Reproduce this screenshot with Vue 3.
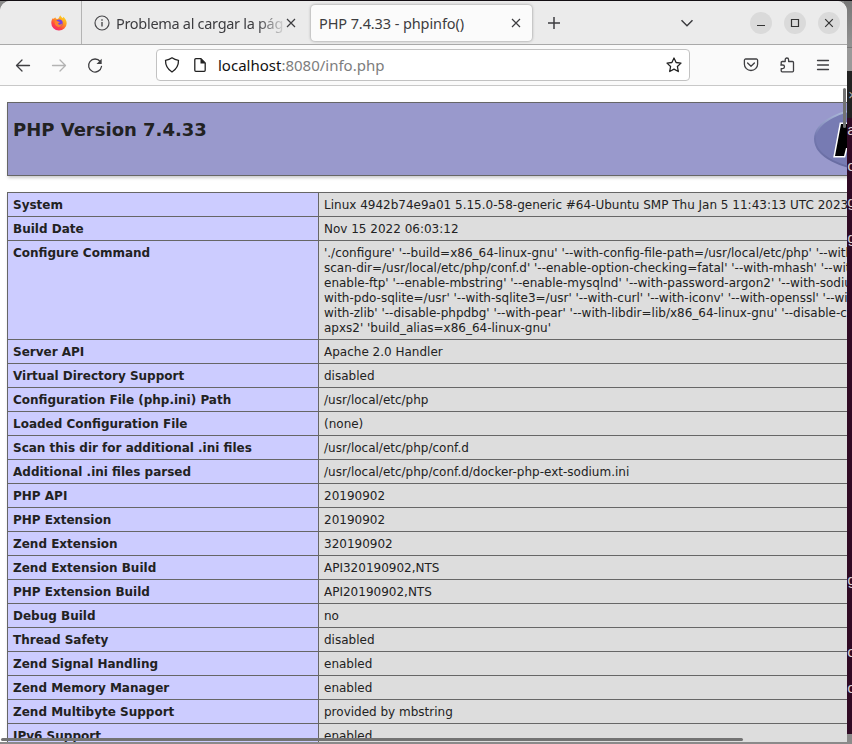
<script setup>
const rows = [
  ['System', 'Linux 4942b74e9a01 5.15.0-58-generic #64-Ubuntu SMP Thu Jan 5 11:43:13 UTC 2023'],
  ['Build Date', 'Nov 15 2022 06:03:12'],
  ['Configure Command', [
    "'./configure' '--build=x86_64-linux-gnu' '--with-config-file-path=/usr/local/etc/php' '--with-config-file-",
    "scan-dir=/usr/local/etc/php/conf.d' '--enable-option-checking=fatal' '--with-mhash' '--with-pic' '--",
    "enable-ftp' '--enable-mbstring' '--enable-mysqlnd' '--with-password-argon2' '--with-sodium=shared' '--",
    "with-pdo-sqlite=/usr' '--with-sqlite3=/usr' '--with-curl' '--with-iconv' '--with-openssl' '--with-readline' '--",
    "with-zlib' '--disable-phpdbg' '--with-pear' '--with-libdir=lib/x86_64-linux-gnu' '--disable-cgi' '--with-",
    "apxs2' 'build_alias=x86_64-linux-gnu'",
  ].join('\n')],
  ['Server API', 'Apache 2.0 Handler'],
  ['Virtual Directory Support', 'disabled'],
  ['Configuration File (php.ini) Path', '/usr/local/etc/php'],
  ['Loaded Configuration File', '(none)'],
  ['Scan this dir for additional .ini files', '/usr/local/etc/php/conf.d'],
  ['Additional .ini files parsed', '/usr/local/etc/php/conf.d/docker-php-ext-sodium.ini'],
  ['PHP API', '20190902'],
  ['PHP Extension', '20190902'],
  ['Zend Extension', '320190902'],
  ['Zend Extension Build', 'API320190902,NTS'],
  ['PHP Extension Build', 'API20190902,NTS'],
  ['Debug Build', 'no'],
  ['Thread Safety', 'disabled'],
  ['Zend Signal Handling', 'enabled'],
  ['Zend Memory Manager', 'enabled'],
  ['Zend Multibyte Support', 'provided by mbstring'],
  ['IPv6 Support', 'enabled'],
]
const terminalGlyphs = [
  { ch: 'a', y: 132 }, { ch: 'c', y: 168 }, { ch: 'g', y: 204 }, { ch: 'g', y: 240 },
  { ch: 'g', y: 582 }, { ch: 'c', y: 654 }, { ch: 'c', y: 690 },
]
</script>

<template>
  <div class="desktop">
    <div class="behind">
      <div class="behind-title"></div>
      <div class="behind-bar"></div>
      <div class="behind-menu"></div>
      <div class="behind-term"></div>
      <span v-for="g in terminalGlyphs" :key="g.y" class="glyph" :style="{ top: g.y - 10 + 'px' }">{{ g.ch }}</span>
      <span class="glyph menu-x">×</span>
    </div>

    <div class="window">
      <header class="tabs">
        <div class="pinned">
          <svg class="firefox" width="16" height="16" viewBox="0 0 16 16">
            <defs>
              <linearGradient id="flame" x1=".85" y1="0" x2=".2" y2="1">
                <stop offset="0" stop-color="#ffe226" />
                <stop offset=".4" stop-color="#ff9a1f" />
                <stop offset=".7" stop-color="#ff4a3d" />
                <stop offset="1" stop-color="#f0207c" />
              </linearGradient>
            </defs>
            <path d="M.3 8C.3 5.7 1 4.2 2 3c.2 0 .3.7.5 1C3.300 3.200 4 2.500 4.300 2.200c.2 1 .9 1.600 1.700 1.800C8 4 8 2 9.300.2c.3 1.200 1.300 2 2.500 3l.5-1.400C14 3.400 15.700 5.600 15.700 8.300A7.700 7.400 0 0 1 .3 8z" fill="url(#flame)" />
            <circle cx="8.200" cy="7.900" r="3.500" fill="#7542e5" />
            <path d="M3.600 6.300c1.400-.9 2.600-.7 3.500.1l1.900.5c-.3 1-1.900.8-2 1.900.8 1.600 3.600.8 4.300-.7.1 2.300-1.600 4-3.900 3.800-2.500-.2-4-2.500-3.800-5.600z" fill="#ff842e" />
          </svg>
        </div>
        <div class="tab idle">
          <svg width="16" height="16" viewBox="0 0 16 16" fill="none" stroke="#4a4a4d" stroke-width="1.2">
            <circle cx="8" cy="8" r="7" /><path d="M8 7v4.500M8 4.200v1.500" stroke-width="1.400" />
          </svg>
          <span class="tab-title fading">Problema al cargar la página</span>
          <svg class="close" width="10" height="10" viewBox="0 0 10 10"><path d="M1 1l8 8M9 1L1 9" /></svg>
        </div>
        <div class="tab active">
          <span class="tab-title">PHP 7.4.33 - phpinfo()</span>
          <svg class="close" width="10" height="10" viewBox="0 0 10 10"><path d="M1 1l8 8M9 1L1 9" /></svg>
        </div>
        <svg class="plus" width="14" height="14" viewBox="0 0 14 14"><path d="M7 1v12M1 7h12" /></svg>
        <svg class="chevron" width="14" height="8" viewBox="0 0 14 8"><path d="M1.500 1.200L7 6.700l5.500-5.500" /></svg>
        <div class="controls">
          <span class="control"><svg width="10" height="10" viewBox="0 0 10 10"><path d="M1 7.500h8" /></svg></span>
          <span class="control"><svg width="10" height="10" viewBox="0 0 10 10"><path d="M1.500 1.500h7v7h-7z" /></svg></span>
          <span class="control"><svg width="10" height="10" viewBox="0 0 10 10"><path d="M1.200 1.200l7.600 7.600M8.800 1.200L1.200 8.800" /></svg></span>
        </div>
      </header>

      <nav class="toolbar">
        <svg class="tool back" width="16" height="16" viewBox="0 0 16 16"><path d="M14.500 8.500H1.500M7 3L1.500 8.500 7 14" /></svg>
        <svg class="tool forward" width="16" height="16" viewBox="0 0 16 16"><path d="M1.500 8.500h13M9 3L14.500 8.500 9 14" /></svg>
        <svg class="tool reload" width="16" height="16" viewBox="0 0 16 16">
          <path d="M13.200 4.500A6.500 6.500 0 1 0 14.500 9.500" /><path d="M14.700 1.800v5.200H9.500z" fill="#3f3f42" stroke="none" />
        </svg>
        <div class="address">
          <svg class="tool" width="16" height="16" viewBox="0 0 16 16"><path d="M8 .8c2 1.500 4 2.200 6.500 2.500.1 5-2.500 9.200-6.500 11.700C4 12.500 1.400 8.300 1.500 3.300 4 3 6 2.300 8 .8z" /></svg>
          <svg class="tool page" width="14" height="16" viewBox="0 0 14 16"><path d="M2.800 1.700H8l4.200 4.200v7.400a1 1 0 0 1-1 1H2.800a1 1 0 0 1-1-1V2.700a1 1 0 0 1 1-1z" /><path d="M7.500 1.500v5h5z" fill="#222" stroke="none" /></svg>
          <span class="url"><b>localhost</b>:8080/info.php</span>
          <svg class="tool star" width="16" height="16" viewBox="0 0 16 16"><path d="M8 1l2.100 4.500 4.900.6-3.600 3.400.9 5L8 12.100l-4.300 2.400.9-5L1 6.100l4.900-.6z" /></svg>
        </div>
        <svg class="tool pocket" width="16" height="16" viewBox="0 0 16 16"><path d="M2.700 2h10.600a1.300 1.300 0 0 1 1.300 1.300v3.900a6.600 6.300 0 0 1-13.200 0V3.300A1.300 1.300 0 0 1 2.700 2zM4.600 6L8 9.300 11.400 6" /></svg>
        <svg class="tool puzzle" width="16" height="16" viewBox="0 0 16 16"><path d="M2.200 7V5.500a1 1 0 0 1 1-1h3V2.700a1.700 1.700 0 0 1 3.400 0v1.800h3.900a1 1 0 0 1 1 1v8.300a1 1 0 0 1-1 1H3.200a1 1 0 0 1-1-1v-2.200h1.500a1.800 1.800 0 0 0 0-3.600H1.800" /></svg>
        <svg class="tool menu" width="14" height="14" viewBox="0 0 14 14"><path d="M1.500 2.500h11M1.500 7h11M1.500 11.500h11" /></svg>
      </nav>

      <main class="page-view">
        <section class="banner">
          <h1>PHP Version 7.4.33</h1>
          <svg class="logo" width="122" height="64" viewBox="0 0 122 64">
            <defs><linearGradient id="rim" x1="0" y1="0" x2="0" y2="1"><stop offset="0" stop-color="#b4c3df" /><stop offset=".45" stop-color="#7378af" /><stop offset="1" stop-color="#666a9f" /></linearGradient></defs>
            <ellipse cx="61" cy="32" rx="60" ry="31" fill="#777bb3" stroke="url(#rim)" stroke-width="2" />
            <path d="M27 17h20c8 0 11 5 9 13-2 8-7 11-15 11h-9l-2 8h-9z" fill="#000" stroke="#fff" stroke-width="3" paint-order="stroke" />
          </svg>
        </section>
        <section class="info">
          <div v-for="r in rows" :key="r[0]" class="row">
            <div class="key">{{ r[0] }}</div>
            <div class="value">{{ r[1] }}</div>
          </div>
        </section>
        <div class="vbar"></div>
        <div class="hbar"></div>
      </main>
    </div>
  </div>
</template>

<style>
body { margin: 0; overflow: hidden; }
</style>

<style scoped>
* { box-sizing: border-box; }
.desktop { position: relative; width: 852px; height: 744px; overflow: hidden; background: #8a8a8a; border-top: 1px solid #120d12; }
svg { display: block; flex: none; fill: none; overflow: visible; }
.behind { position: absolute; top: -1px; right: 0; width: 8px; height: 744px; overflow: hidden; }
.behind-title { height: 47px; background: linear-gradient(#777, #929292); }
.behind-bar { height: 24px; background: #999; border-top: 1px solid #777; }
.behind-menu { height: 47px; background: #222; }
.behind-term { height: 616px; background: #300a24; }
.glyph { position: absolute; left: 3px; font: 15px/20px "Liberation Mono", monospace; color: #d8d0d6; }
.menu-x { top: 87px; left: 4px; color: #aaa; }
.window { position: relative; width: 847px; height: 741px; overflow: hidden; border-radius: 10px 10px 0 0; background: #fff; font-family: "Noto Sans", sans-serif; }
.tabs { display: flex; align-items: center; height: 44px; background: #ebebeb; border-bottom: 1px solid #a9a9a9; }
.pinned { display: flex; width: 82px; height: 43px; align-items: center; padding-left: 51px; border-right: 1px solid #b4b4b4; }
.tab { display: flex; align-items: center; flex: none; color: #3d3d40; font-size: 14.500px; }
.tab-title { flex: 1; overflow: hidden; white-space: nowrap; line-height: 24px; letter-spacing: -.1px; }
.idle { width: 228px; padding: 0 14px 0 12px; gap: 6px; }
.idle .close { margin-left: -4px; }
.idle .tab-title { letter-spacing: -.3px; }
.fading { -webkit-mask-image: linear-gradient(90deg, #000 84%, transparent 102%); mask-image: linear-gradient(90deg, #000 84%, transparent 102%); }
.active { width: 221px; height: 36px; margin: 0 1px; padding: 0 11px 0 8px; border-radius: 4px; background: #fbfbfb; box-shadow: 0 0 3px #888; }
.close, .plus, .chevron { stroke: #3d3d40; stroke-width: 1.200; }
.close { width: 10px; height: 10px; }
.plus { width: 14px; height: 14px; margin-left: 14px; stroke-width: 1.500; }
.chevron { margin-left: 119px; stroke-width: 1.500; }
.controls { display: flex; gap: 12px; margin-left: 56px; }
.control { display: grid; place-items: center; width: 22px; height: 22px; border-radius: 50%; background: #dadada; }
.control svg { stroke: #333; stroke-width: 1.200; }
.toolbar { display: flex; align-items: center; height: 41px; padding-left: 15px; background: #fafafa; border-bottom: 1px solid #c8c8c8; }
.tool { stroke: #3f3f42; stroke-width: 1.300; stroke-linejoin: round; stroke-linecap: round; }
.forward { margin-left: 20px; stroke: #b3b3b3; }
.reload { margin-left: 20px; }
.address { display: flex; align-items: center; width: 534px; height: 32px; margin-left: 53px; padding: 0 7px; border: 1px solid #c2c2c2; border-radius: 4px; background: #fff; }
.address .tool { stroke: #222; }
.page { margin-left: 13px; }
.url { flex: 1; margin-left: 11px; font-size: 15px; line-height: 24px; color: #7d7d7d; }
.url b { font-weight: 400; color: #111; }
.pocket { margin-left: 53px; }
.puzzle { margin-left: 20px; }
.menu { margin-left: 21px; }
.page-view { position: relative; height: 656px; padding: 16px 0 0 7px; overflow: hidden; font-family: "DejaVu Sans", sans-serif; color: #222; }
.banner { display: flex; align-items: flex-start; justify-content: space-between; width: 935px; height: 74px; padding: 4px 5px; border: 1px solid #666; background: #99c; box-shadow: 1px 2px 3px #ccc; }
h1 { margin: 12px 0 0; font-size: 18px; line-height: 21px; }
.logo { margin: 0; }
.info { width: 935px; margin-top: 16px; border-top: 1px solid #666; border-left: 1px solid #666; box-shadow: 1px 2px 3px #ccc; font-size: 12px; line-height: 15px; }
.row { display: grid; grid-template-columns: 311px 1fr; }
.key, .value { padding: 5px 5px 3px; border-right: 1px solid #666; border-bottom: 1px solid #666; white-space: pre; }
.key { font-weight: 700; background: #ccf; }
.value { background: #ddd; overflow: hidden; }
.vbar { position: absolute; top: 2px; right: 1px; width: 3px; height: 40px; border-radius: 2px; background: #737373; }
.hbar { position: absolute; left: 1px; bottom: 1px; width: 742px; height: 3px; border-radius: 2px; background: #737373; }
</style>
